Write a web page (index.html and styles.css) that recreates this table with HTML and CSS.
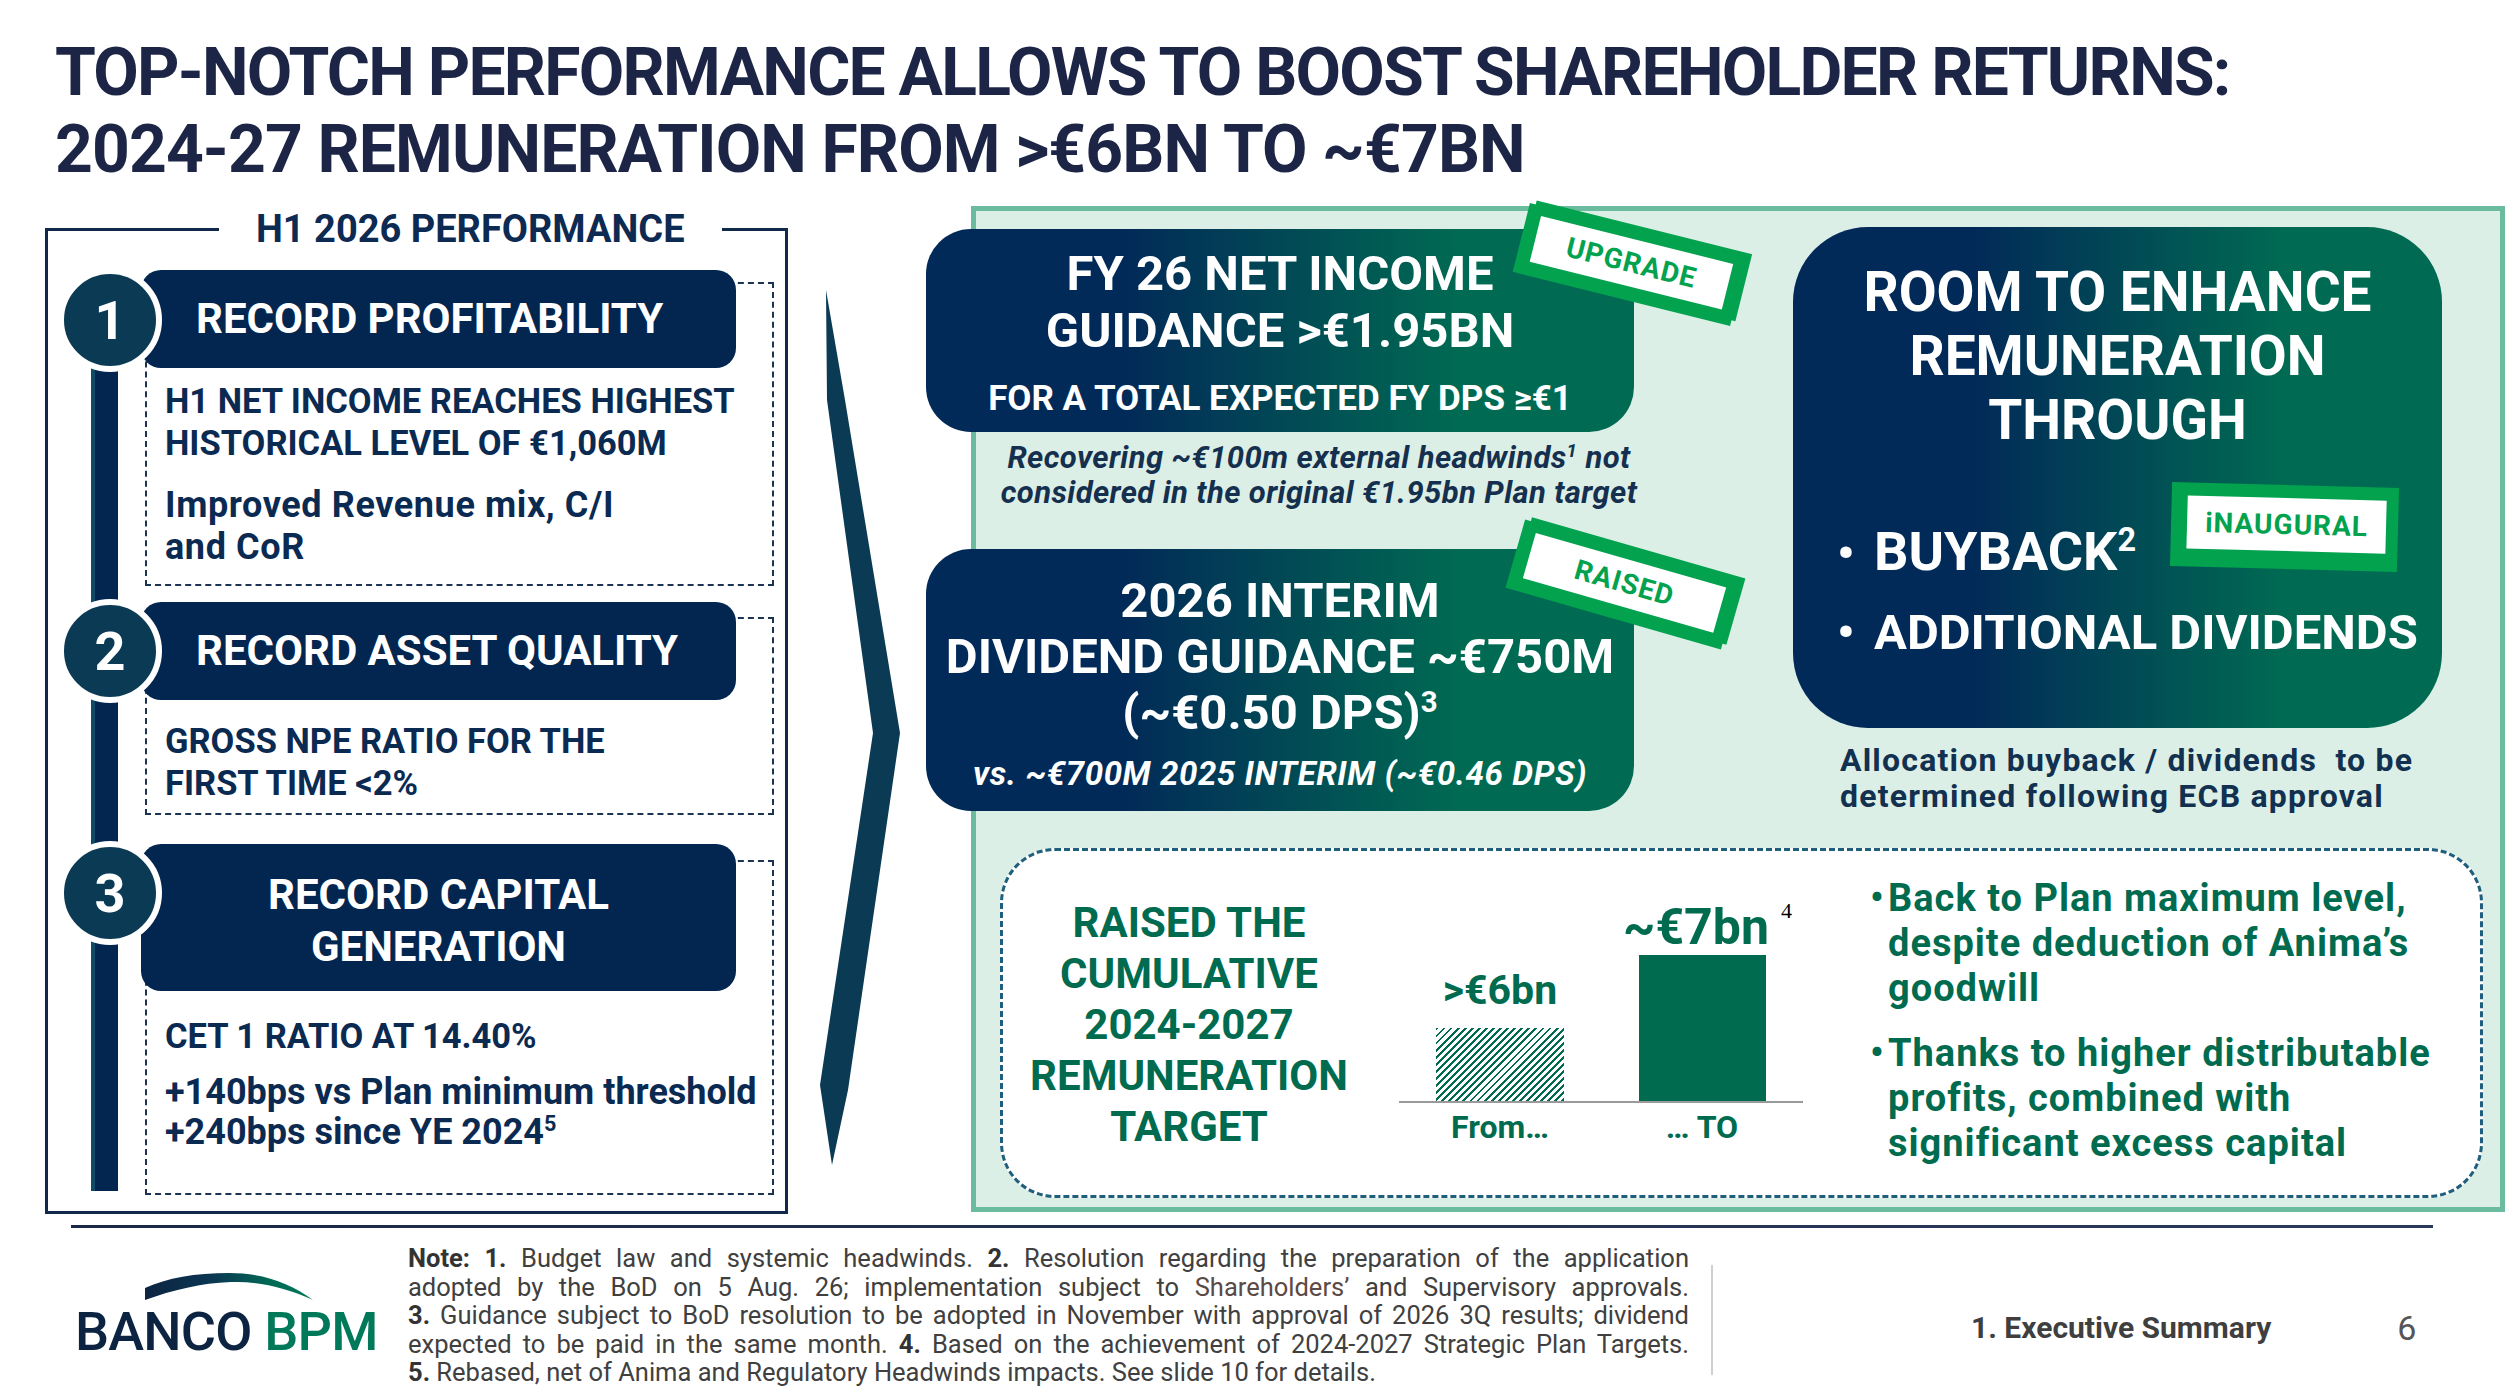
FILE: index.html
```html
<!DOCTYPE html>
<html lang="en">
<head>
<meta charset="utf-8">
<title>Top-notch performance allows to boost shareholder returns</title>
<link rel="stylesheet" href="styles.css">
</head>
<body>
<div class="slide">
  <h1 class="title"><span class="t1">TOP-NOTCH PERFORMANCE ALLOWS TO BOOST SHAREHOLDER RETURNS:</span><br><span class="t2">2024-27 REMUNERATION FROM &gt;€6BN TO ~€7BN</span></h1>

  <main class="content">
    <fieldset class="perf">
      <legend>H1 2026 PERFORMANCE</legend>
      <div class="perf-grid">
        <div class="timeline"></div>
        <div class="items">
          <section class="item item-1">
            <div class="num">1</div>
            <h2 class="bar">RECORD PROFITABILITY</h2>
            <p class="caps">H1 NET INCOME REACHES HIGHEST<br>HISTORICAL LEVEL OF €1,060M</p>
            <p class="mixed mixed-wide">Improved Revenue mix, C/I<br>and CoR</p>
          </section>
          <section class="item item-2">
            <div class="num">2</div>
            <h2 class="bar">RECORD ASSET QUALITY</h2>
            <p class="caps">GROSS NPE RATIO FOR THE<br>FIRST TIME &lt;2%</p>
          </section>
          <section class="item item-3">
            <div class="num">3</div>
            <h2 class="bar bar-center">RECORD CAPITAL<br>GENERATION</h2>
            <p class="caps">CET 1 RATIO AT 14.40%</p>
            <p class="mixed">+140bps vs Plan minimum threshold<br>+240bps since YE 2024<sup>5</sup></p>
          </section>
        </div>
      </div>
    </fieldset>

    <svg class="chevron" width="183" height="1006" viewBox="0 0 183 1006" aria-hidden="true">
      <polygon points="38,84 57,194 112,527 60,884 44,959 32,879 85,527 39,194" fill="#0b3a55"/>
    </svg>

    <section class="panel">
      <div class="panel-top">
        <div class="col-guidance">
          <div class="gbox gbox-a">
            <p class="g-head">FY 26 NET INCOME<br>GUIDANCE &gt;€1.95BN</p>
            <p class="g-sub">FOR A TOTAL EXPECTED FY DPS ≥€1</p>
            <div class="stamp stamp-upgrade"><span>UPGRADE</span></div>
          </div>
          <p class="g-note">Recovering ~€100m external headwinds<sup>1</sup> not<br>considered in the original €1.95bn Plan target</p>
          <div class="gbox gbox-b">
            <p class="g-head">2026 INTERIM<br>DIVIDEND GUIDANCE ~€750M<br>(~€0.50 DPS)<sup>3</sup></p>
            <p class="g-vs">vs. ~€700M 2025 INTERIM (~€0.46 DPS)</p>
            <div class="stamp stamp-raised"><span>RAISED</span></div>
          </div>
        </div>
        <div class="col-room">
          <div class="room">
            <p class="room-head">ROOM TO ENHANCE<br>REMUNERATION<br>THROUGH</p>
            <ul class="room-list">
              <li class="big"><span class="bul">•</span>BUYBACK<sup>2</sup></li>
              <li><span class="bul">•</span>ADDITIONAL DIVIDENDS</li>
            </ul>
            <div class="stamp stamp-inaugural"><span>iNAUGURAL</span></div>
          </div>
          <p class="alloc">Allocation buyback / dividends&nbsp; to be<br>determined following ECB approval</p>
        </div>
      </div>

      <div class="target">
        <p class="target-title">RAISED THE<br>CUMULATIVE<br>2024-2027<br>REMUNERATION<br>TARGET</p>
        <div class="chart">
          <div class="bars">
            <div class="col">
              <div class="val">&gt;€6bn</div>
              <div class="hatch"></div>
            </div>
            <div class="col">
              <div class="val val-big">~€7bn<span class="fn">4</span></div>
              <div class="solid"></div>
            </div>
          </div>
          <div class="xlabels"><span>From…</span><span>… TO</span></div>
        </div>
        <ul class="target-list">
          <li><span class="tb">•</span>Back to Plan maximum level,<br>despite deduction of Anima’s<br>goodwill</li>
          <li><span class="tb">•</span>Thanks to higher distributable<br>profits, combined with<br>significant excess capital</li>
        </ul>
      </div>
    </section>
  </main>

  <footer class="footer">
    <div class="rule"></div>
    <div class="foot-row">
      <div class="logo">
        <svg class="logo-arc" width="168" height="28" viewBox="0 0 168 28" aria-hidden="true">
          <defs>
            <linearGradient id="arcgrad" x1="0" y1="0" x2="1" y2="0">
              <stop offset="0" stop-color="#0c2441"/>
              <stop offset="0.4" stop-color="#0b3652"/>
              <stop offset="0.75" stop-color="#016b55"/>
              <stop offset="1" stop-color="#00785a"/>
            </linearGradient>
          </defs>
          <path d="M0,15 C22,5 50,0 84,0 C118,0 145,10 168,27 C140,14 112,8 86,9 C56,10 28,17 0,27 Z" fill="url(#arcgrad)"/>
        </svg>
        <div class="logo-text"><span class="banco">BANCO</span> <span class="bpm">BPM</span></div>
      </div>
      <div class="notes">
        <div class="nl"><b>Note: 1.</b> Budget law and systemic headwinds. <b>2.</b> Resolution regarding the preparation of the application</div>
        <div class="nl">adopted by the BoD on 5 Aug. 26; implementation subject to <span class="sh">Shareholders’</span> and Supervisory approvals.</div>
        <div class="nl"><b>3.</b> Guidance subject to BoD resolution to be adopted in November with approval of 2026 3Q results; dividend</div>
        <div class="nl">expected to be paid in the same month. <b>4.</b> Based on the achievement of 2024-2027 Strategic Plan Targets.</div>
        <div class="nl nl-last"><b>5.</b> Rebased, net of Anima and Regulatory Headwinds impacts. See slide 10 for details.</div>
      </div>
      <div class="vsep"></div>
      <div class="section-name">1. Executive Summary</div>
      <div class="page-num">6</div>
    </div>
  </footer>
</div>
</body>
</html>
```

FILE: styles.css
```css
* { box-sizing: border-box; }
html, body { margin: 0; padding: 0; }
body {
  width: 2518px;
  height: 1386px;
  overflow: hidden;
  background: #ffffff;
  font-family: Roboto, "Liberation Sans", Arial, sans-serif;
}
.slide { width: 2518px; height: 1386px; }
p { margin: 0; }
sup { font-size: 0.6em; line-height: 0; vertical-align: super; }

/* ---------- title ---------- */
.title {
  margin: 0;
  padding: 34px 0 0 55px;
  font-size: 66px;
  line-height: 77px;
  font-weight: 700;
  color: #1c2545;
  white-space: nowrap;
}
.t1 { letter-spacing: -1.75px; }
.t2 { letter-spacing: -0.9px; }

/* ---------- main row ---------- */
.content {
  display: flex;
  align-items: flex-start;
  margin-top: 18px;
}

/* left panel */
.perf {
  flex: none;
  margin: 3px 0 0 45px;
  width: 743px;
  min-width: 0;
  border: 3px solid #10294b;
  padding: 0 0 16px 0;
}
.perf legend {
  margin-left: 171px;
  padding: 0 37px;
  font-size: 38px;
  line-height: 40px;
  font-weight: 700;
  color: #0d2a52;
}
.perf-grid {
  display: grid;
  grid-template-columns: 27px 629px;
  column-gap: 27px;
  padding-left: 43px;
}
.timeline {
  margin: 81px 0 4px 0;
  background: #022650;
  border-left: 4px solid #0f4a66;
}
.items { display: flex; flex-direction: column; }
.item {
  position: relative;
  border: 2px dashed #1d3354;
  padding-left: 18px;
  color: #0b2a52;
}
.item-1 { margin-top: 33px; height: 304px; }
.item-2 { margin-top: 31px; height: 198px; }
.item-3 { margin-top: 45px; height: 335px; }

.num {
  position: absolute;
  left: -89px;
  width: 104px;
  height: 104px;
  border: 6px solid #ffffff;
  border-radius: 50%;
  background: #0b3a55;
  color: #ffffff;
  font-size: 54px;
  font-weight: 700;
  display: flex;
  align-items: center;
  justify-content: center;
  z-index: 2;
}
.item-1 .num { top: -16px; }
.item-2 .num { top: -20px; }
.item-3 .num { top: -21px; }

.bar {
  margin: 0 0 0 -24px;
  width: 595px;
  height: 98px;
  background: #022650;
  color: #ffffff;
  border-radius: 20px;
  font-size: 42px;
  line-height: 48px;
  font-weight: 700;
  display: flex;
  align-items: center;
  padding-left: 55px;
  white-space: nowrap;
}
.item-1 .bar { margin-top: -14px; }
.item-2 .bar { margin-top: -17px; }
.item-3 .bar { margin-top: -18px; }
.bar-center {
  height: 147px;
  display: block;
  padding: 25px 0 0 0;
  text-align: center;
  line-height: 52px;
}

.caps, .mixed {
  font-weight: 700;
  white-space: nowrap;
  line-height: 42px;
}
.caps { font-size: 34.5px; }
.mixed { font-size: 36px; }
.mixed-wide { letter-spacing: 0.6px; }
.item-1 .caps { margin-top: 12px; }
.item-1 .mixed { margin-top: 20px; }
.item-2 .caps { margin-top: 20px; }
.item-3 .caps { margin-top: 24px; }
.item-3 .mixed { margin-top: 15px; line-height: 40px; }

/* chevron */
.chevron { flex: none; display: block; }

/* right panel */
.panel {
  flex: none;
  width: 1534px;
  height: 1006px;
  border: 5px solid #6bbb9e;
  background: #dcefe7;
  padding: 18px 0 9px 0;
}
.panel-top {
  display: flex;
  align-items: flex-start;
  height: 582px;
}
.col-guidance {
  flex: none;
  width: 708px;
  margin-left: -50px;
}
.gbox, .room {
  position: relative;
  background: linear-gradient(90deg, #022a58 28%, #006b52 76%);
  color: #ffffff;
}
.gbox {
  border-radius: 45px;
  text-align: center;
}
.gbox-a { height: 203px; padding-top: 16px; }
.g-head {
  font-size: 49px;
  line-height: 57px;
  font-weight: 700;
  white-space: nowrap;
}
.g-sub {
  margin-top: 20px;
  font-size: 35px;
  line-height: 40px;
  font-weight: 700;
  white-space: nowrap;
}
.g-note {
  margin: 8px 0 0 73px;
  width: 640px;
  text-align: center;
  white-space: nowrap;
  font-size: 31px;
  line-height: 35px;
  font-weight: 700;
  font-style: italic;
  letter-spacing: 0.4px;
  color: #15304e;
}
.gbox-b { margin-top: 39px; height: 262px; padding-top: 24px; }
.gbox-b .g-head { line-height: 56px; }
.g-vs {
  margin-top: 13px;
  font-size: 33px;
  line-height: 40px;
  font-weight: 700;
  font-style: italic;
  letter-spacing: 0.6px;
  white-space: nowrap;
}

.col-room {
  flex: none;
  width: 649px;
  margin-left: 159px;
}
.room {
  height: 501px;
  margin-top: -2px;
  border-radius: 75px;
  padding: 33px 0 0 44px;
}
.room-head {
  margin-left: -44px;
  text-align: center;
  font-size: 55px;
  line-height: 64px;
  font-weight: 700;
}
.room-list {
  list-style: none;
  margin: 68px 0 0 0;
  padding: 0;
  font-size: 49px;
  line-height: 64px;
  font-weight: 700;
  white-space: nowrap;
}
.room-list .big { font-size: 54px; }
.room-list li + li { margin-top: 15px; }
.bul { display: inline-block; width: 37px; font-size: 49px; }
.alloc {
  margin-top: 14px;
  padding-left: 47px;
  font-size: 32px;
  line-height: 36px;
  font-weight: 700;
  letter-spacing: 1.2px;
  color: #12304f;
  white-space: nowrap;
}

/* stamps */
.stamp {
  position: absolute;
  background: #03a24e;
  padding: 10px 12px 14px 14px;
  transform: rotate(14deg);
  box-shadow: 5px -5px 0 -1px #03a24e;
  z-index: 3;
}
.stamp span {
  display: flex;
  align-items: center;
  justify-content: center;
  height: 100%;
  background: #ffffff;
  color: #03a24e;
  font-size: 28px;
  font-weight: 700;
  letter-spacing: 1px;
}
.stamp-upgrade { left: 592px; top: 0; width: 224px; height: 71px; }
.stamp-raised { left: 585px; top: 0; width: 224px; height: 71px; transform: rotate(16deg); }
.stamp-inaugural {
  left: 378px;
  top: 258px;
  width: 227px;
  height: 84px;
  padding: 13px 12px 18px 16px;
  transform: rotate(1.5deg);
  box-shadow: none;
}

/* target box */
.target {
  display: flex;
  align-items: flex-start;
  height: 350px;
  margin: 37px 17px 0 24px;
  border: 3px dashed #1f5e7c;
  border-radius: 55px;
  background: #ffffff;
  color: #006b4f;
}
.target-title {
  flex: none;
  width: 340px;
  margin: 46px 0 0 16px;
  text-align: center;
  font-size: 42px;
  line-height: 51px;
  font-weight: 700;
}
.chart { flex: none; width: 404px; margin-left: 40px; }
.bars {
  display: flex;
  align-items: flex-end;
  height: 252px;
  border-bottom: 2px solid #9a9a9a;
}
.col {
  flex: 1;
  display: flex;
  flex-direction: column;
  align-items: center;
}
.val {
  font-size: 41px;
  line-height: 44px;
  font-weight: 700;
  margin-bottom: 16px;
  white-space: nowrap;
}
.val-big { font-size: 50px; line-height: 54px; margin-bottom: 1px; }
.fn {
  display: inline-block;
  width: 0;
  margin-left: 12px;
  font-family: "Liberation Serif", serif;
  font-size: 22px;
  line-height: 22px;
  font-weight: 400;
  color: #000000;
  vertical-align: top;
}
.hatch {
  width: 128px;
  height: 73px;
  background: repeating-linear-gradient(135deg, #006b4f 0 2px, #ffffff 2px 5px);
}
.solid { width: 127px; height: 146px; background: #006b4f; }
.xlabels { display: flex; margin-top: 6px; }
.xlabels span {
  flex: 1;
  text-align: center;
  font-size: 32px;
  line-height: 36px;
  font-weight: 700;
}
.target-list {
  list-style: none;
  margin: 25px 0 0 67px;
  padding: 0;
  font-size: 38px;
  line-height: 45px;
  font-weight: 700;
  letter-spacing: 1px;
  white-space: nowrap;
}
.target-list li { padding-left: 18px; text-indent: -18px; }
.target-list li + li { margin-top: 20px; }
.tb { display: inline-block; width: 18px; text-indent: 0; letter-spacing: 0; }

/* ---------- footer ---------- */
.rule {
  margin: 11px 0 0 71px;
  width: 2362px;
  height: 3px;
  background: linear-gradient(90deg, #1b2748, #2a3a5c);
}
.foot-row {
  display: flex;
  align-items: flex-start;
  padding: 16px 0 0 75px;
}
.logo { flex: none; width: 300px; margin-top: 29px; }
.logo-arc { display: block; margin-left: 70px; }
.logo-text {
  margin-top: 3px;
  font-size: 54px;
  line-height: 56px;
  font-weight: 500;
  letter-spacing: -0.8px;
  white-space: nowrap;
}
.banco { color: #0c2441; }
.bpm { color: #00785a; }
.notes {
  flex: none;
  width: 1281px;
  margin-left: 33px;
  font-size: 25.5px;
  line-height: 28.5px;
  color: #404040;
}
.notes b { font-weight: 700; color: #333333; }
.nl { text-align: justify; text-align-last: justify; }
.nl-last { text-align: left; text-align-last: left; }
.sh { color: #5b4a45; }
.vsep {
  flex: none;
  width: 2px;
  height: 110px;
  margin: 21px 0 0 22px;
  background: #cfcfcf;
}
.section-name {
  margin: 66px 0 0 258px;
  font-size: 30px;
  line-height: 36px;
  font-weight: 700;
  color: #3f3f3f;
  white-space: nowrap;
}
.page-num {
  margin: 64px 0 0 126px;
  font-size: 34px;
  line-height: 40px;
  color: #555555;
}
```
